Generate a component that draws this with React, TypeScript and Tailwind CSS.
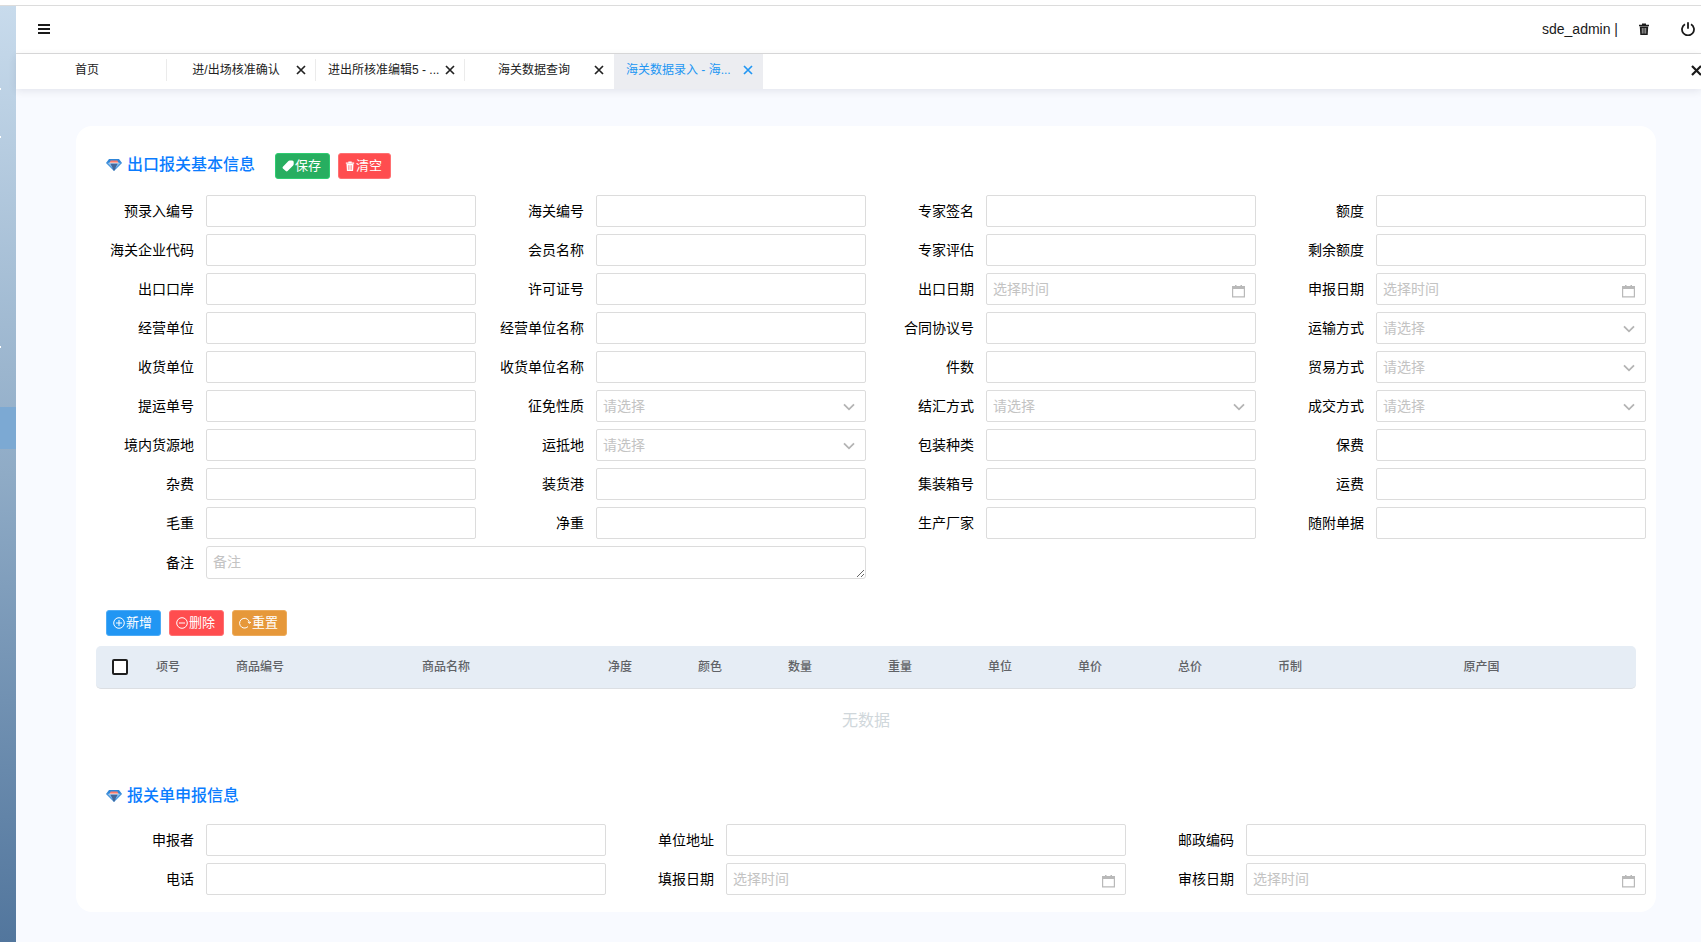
import { useState } from "react";
import type { ReactNode } from "react";
import { clsx } from "clsx";

type Kind = "text" | "date" | "select";

type FieldDef = {
  name: string;
  label: string;
  kind?: Kind;
};

const tabs = [
  { id: "home", title: "首页", closable: false },
  { id: "confirm", title: "进/出场核准确认", closable: true },
  { id: "edit", title: "进出所核准编辑5 - ...", closable: true },
  { id: "query", title: "海关数据查询", closable: true },
  { id: "entry", title: "海关数据录入 - 海...", closable: true },
];

const basicFields: FieldDef[] = [
  { name: "preEntryNo", label: "预录入编号" },
  { name: "customsNo", label: "海关编号" },
  { name: "expertSign", label: "专家签名" },
  { name: "quota", label: "额度" },
  { name: "companyCode", label: "海关企业代码" },
  { name: "memberName", label: "会员名称" },
  { name: "expertReview", label: "专家评估" },
  { name: "quotaLeft", label: "剩余额度" },
  { name: "exportPort", label: "出口口岸" },
  { name: "licenseNo", label: "许可证号" },
  { name: "exportDate", label: "出口日期", kind: "date" },
  { name: "declareDate", label: "申报日期", kind: "date" },
  { name: "operator", label: "经营单位" },
  { name: "operatorName", label: "经营单位名称" },
  { name: "contractNo", label: "合同协议号" },
  { name: "transport", label: "运输方式", kind: "select" },
  { name: "receiver", label: "收货单位" },
  { name: "receiverName", label: "收货单位名称" },
  { name: "pieces", label: "件数" },
  { name: "trade", label: "贸易方式", kind: "select" },
  { name: "billNo", label: "提运单号" },
  { name: "taxNature", label: "征免性质", kind: "select" },
  { name: "settlement", label: "结汇方式", kind: "select" },
  { name: "deal", label: "成交方式", kind: "select" },
  { name: "origin", label: "境内货源地" },
  { name: "destination", label: "运抵地", kind: "select" },
  { name: "packing", label: "包装种类" },
  { name: "insurance", label: "保费" },
  { name: "extras", label: "杂费" },
  { name: "loadingPort", label: "装货港" },
  { name: "containerNo", label: "集装箱号" },
  { name: "freight", label: "运费" },
  { name: "grossWeight", label: "毛重" },
  { name: "netWeight", label: "净重" },
  { name: "producer", label: "生产厂家" },
  { name: "documents", label: "随附单据" },
];

const declareFields: FieldDef[] = [
  { name: "declarant", label: "申报者" },
  { name: "address", label: "单位地址" },
  { name: "postcode", label: "邮政编码" },
  { name: "phone", label: "电话" },
  { name: "fillDate", label: "填报日期", kind: "date" },
  { name: "auditDate", label: "审核日期", kind: "date" },
];

const columns = [
  { title: "项号", width: "w-[70px]" },
  { title: "商品编号", width: "w-[114px]" },
  { title: "商品名称", width: "w-[258px]" },
  { title: "净度", width: "w-[90px]" },
  { title: "颜色", width: "w-[90px]" },
  { title: "数量", width: "w-[90px]" },
  { title: "重量", width: "w-[110px]" },
  { title: "单位", width: "w-[90px]" },
  { title: "单价", width: "w-[90px]" },
  { title: "总价", width: "w-[110px]" },
  { title: "币制", width: "w-[90px]" },
];

const control =
  "h-8 w-full rounded-xs border border-[#dcdcdc] bg-white px-1.5 text-sm text-black outline-none placeholder:text-[#c3c3c3] focus:border-[#2196f3]";

function CloseIcon() {
  return (
    <svg viewBox="0 0 10 10" className="size-2.5" aria-hidden>
      <path d="M1 1l8 8M9 1l-8 8" stroke="currentColor" strokeWidth="1.7" fill="none" />
    </svg>
  );
}

function TrashIcon({ className, slot }: { className: string; slot: string }) {
  return (
    <svg viewBox="0 0 10 12" className={className} aria-hidden>
      <path d="M3 1.8V.5h4v1.3h3v1.4H0V1.8z" fill="currentColor" />
      <path d="M.8 3.6h8.4L8.7 12H1.3z" fill="currentColor" />
      <path d="M3.3 5v5.6M5 5v5.6M6.7 5v5.6" stroke={slot} strokeWidth=".6" />
    </svg>
  );
}

function PowerIcon() {
  return (
    <svg viewBox="0 0 14 14" className="size-3.5" aria-hidden>
      <path
        d="M4 2.2a6 6 0 1 0 6 0M7 .2v6.6"
        fill="none"
        stroke="currentColor"
        strokeWidth="1.8"
      />
    </svg>
  );
}

function TagIcon() {
  return (
    <svg viewBox="0 0 12 12" className="size-3" aria-hidden>
      <path
        d="M7.6.6h2.600q1.500 0 1.500 1.500v2q0 .8-.6 1.500L5.600 11q-.9.8-1.800 0L.9 8.600q-.8-.9 0-1.800L6.200 1.200q.6-.6 1.400-.6z"
        fill="currentColor"
      />
    </svg>
  );
}

function CircleIcon({ children }: { children: ReactNode }) {
  return (
    <svg
      viewBox="0 0 12 12"
      className="size-3"
      fill="none"
      stroke="currentColor"
      aria-hidden
    >
      {children}
    </svg>
  );
}

function GemIcon() {
  return (
    <svg viewBox="0 0 16 12" className="h-3 w-4" aria-hidden>
      <path d="M3 0h10l3 4-8 8-8-8z" fill="#2f86d8" />
      <path d="M4 4.500h8L8 12z" fill="#44679a" />
      <path d="M1 3.800h3L7 10z" fill="#7fb7e8" />
      <path d="M15 3.800h-3L9 10z" fill="#7fb7e8" />
      <path d="M4.600 1.500h6.800l1 2.500H3.600z" fill="#fa7b6b" />
      <path d="M3.400 4h9.200" stroke="#fff" strokeWidth=".8" />
    </svg>
  );
}

function CalendarIcon() {
  return (
    <svg
      viewBox="0 0 13 13"
      className="pointer-events-none absolute top-3 right-[11px] size-[13px] text-[#b9b9b9]"
      aria-hidden
    >
      <path d="M0 1h13v11.500H0z M1.200 4v7.300h10.600V4z" fill="currentColor" fillRule="evenodd" />
      <path d="M3 0h1.500v1.500H3zM8.500 0H10v1.500H8.500z" fill="currentColor" />
    </svg>
  );
}

function ChevronIcon() {
  return (
    <svg
      viewBox="0 0 12 8"
      className="pointer-events-none absolute top-[13px] right-[11px] h-2 w-3 text-[#b4b4b4]"
      aria-hidden
    >
      <path d="M1 1.300l5 5 5-5" fill="none" stroke="currentColor" strokeWidth="1.800" />
    </svg>
  );
}

function Field({ field }: { field: FieldDef }) {
  const { name, label, kind = "text" } = field;
  return (
    <div className="flex items-center">
      <label htmlFor={name} className="w-[120px] shrink-0 pr-3 text-right text-sm text-black">
        {label}
      </label>
      <div className="relative min-w-0 flex-1">
        {kind === "select" ? (
          <>
            <select
              id={name}
              name={name}
              defaultValue=""
              className={clsx(control, "block appearance-none text-[#c3c3c3]!")}
            >
              <option value="">请选择</option>
            </select>
            <ChevronIcon />
          </>
        ) : (
          <input
            id={name}
            name={name}
            type="text"
            placeholder={kind === "date" ? "选择时间" : undefined}
            className={clsx(control, "block")}
          />
        )}
        {kind === "date" ? <CalendarIcon /> : null}
      </div>
    </div>
  );
}

function SectionTitle({ children }: { children: ReactNode }) {
  return (
    <h2 className="flex items-center gap-[5px] text-base font-medium text-[#0a7cff]">
      <GemIcon />
      {children}
    </h2>
  );
}

function ActionButton({ tone, children }: { tone: string; children: ReactNode }) {
  return (
    <button
      type="button"
      className={clsx(
        "flex h-[26px] items-center gap-px rounded-[3px] border pr-2 pl-1.5 text-[13px] whitespace-nowrap text-white",
        tone,
      )}
    >
      {children}
    </button>
  );
}

function Sidebar() {
  return (
    <aside className="relative w-4 shrink-0 bg-linear-to-b from-[#c8dbec] via-[#8fabc6] to-[#52769d]">
      <div className="absolute top-[401px] h-[42px] w-full bg-[#7ca9d3]" />
      <span className="absolute top-[82px] h-0.5 w-px bg-white" />
      <span className="absolute top-[130px] h-0.5 w-px bg-white" />
      <span className="absolute top-[340px] h-0.5 w-px bg-white" />
    </aside>
  );
}

function TopBar() {
  return (
    <header className="flex h-12 items-center border-b border-[#dcdcdc] bg-white pr-1.5 pb-0.5 pl-[22px] text-[#1a1a1a]">
      <button type="button" aria-label="菜单">
        <svg viewBox="0 0 12 10" className="h-2.5 w-3" aria-hidden>
          <path d="M0 1h12M0 5h12M0 9h12" stroke="currentColor" strokeWidth="2" />
        </svg>
      </button>
      <span className="ml-auto text-sm">sde_admin |</span>
      <button type="button" aria-label="清除缓存" className="ml-[21px]">
        <TrashIcon className="h-3 w-2.5" slot="#fff" />
      </button>
      <button type="button" aria-label="退出" className="ml-8">
        <PowerIcon />
      </button>
    </header>
  );
}

function TabBar() {
  const [active, setActive] = useState("entry");
  return (
    <nav className="relative flex h-[35px] overflow-hidden bg-white pl-0.5 shadow-[0_2px_8px_rgba(0,0,40,0.09)]">
      {tabs.map((tab, index) => (
        <div
          key={tab.id}
          className={clsx(
            "flex w-[149px] shrink-0 items-center pb-1 pl-3 text-xs",
            tab.id === active ? "bg-[#ecedf1] text-[#2196f3]" : "text-[#222]",
          )}
        >
          <button
            type="button"
            onClick={() => setActive(tab.id)}
            className={clsx(
              "w-[114px] overflow-hidden whitespace-nowrap",
              tab.title.endsWith("...") ? "text-left" : "text-center",
            )}
          >
            {tab.title}
          </button>
          {tab.closable ? (
            <button type="button" aria-label={`关闭 ${tab.title}`} className="ml-[3px]">
              <CloseIcon />
            </button>
          ) : null}
          {index < 3 ? <span className="ml-auto h-[22px] w-px bg-[#ebebeb]" /> : null}
        </div>
      ))}
      <button
        type="button"
        aria-label="关闭全部"
        className="-mr-px ml-auto shrink-0 pb-0.5 text-[#1a1a1a]"
      >
        <svg viewBox="0 0 11 11" className="size-[11px]" aria-hidden>
          <path d="M1 1l9 9M10 1l-9 9" stroke="currentColor" strokeWidth="2.2" />
        </svg>
      </button>
    </nav>
  );
}

function GoodsTable() {
  return (
    <table className="mt-2.5 w-full table-fixed border-separate border-spacing-0 text-xs">
      <thead>
        <tr className="h-[43px] text-[#606266]">
          <th className="w-[37px] rounded-l-[5px] border-b border-[#dcdfe3] bg-[#e6edf5] pl-4 text-left">
            <input
              type="checkbox"
              aria-label="全选"
              className="block size-4 appearance-none rounded-xs border-2 border-[#1f1f1f] bg-white checked:bg-[#2196f3]"
            />
          </th>
          {columns.map((column) => (
            <th
              key={column.title}
              className={clsx(
                "border-b border-[#dcdfe3] bg-[#e6edf5] font-medium",
                column.width,
              )}
            >
              {column.title}
            </th>
          ))}
          <th className="rounded-r-[5px] border-b border-[#dcdfe3] bg-[#e6edf5] pr-2 font-medium">
            原产国
          </th>
        </tr>
      </thead>
      <tbody>
        <tr>
          <td colSpan={13} className="h-16 text-center text-base text-[#d0d7db]">
            无数据
          </td>
        </tr>
      </tbody>
    </table>
  );
}

export default function App() {
  return (
    <div className="flex min-h-screen flex-col bg-white pt-[5px] font-['Liberation_Sans','Noto_Sans_CJK_SC',sans-serif]">
      <div className="flex flex-1 border-t border-[#dcdcdc]">
        <Sidebar />
        <div className="min-w-0 flex-1 bg-[#f8faff]">
          <TopBar />
          <TabBar />
          <main className="mt-[37px] mr-[45px] mb-[30px] ml-[60px] rounded-2xl bg-white px-2.5 pt-[27px] pb-[17px]">
            <div className="flex h-[26px] items-center gap-2 pl-5">
              <div className="mr-3 pb-0.5">
                <SectionTitle>出口报关基本信息</SectionTitle>
              </div>
              <ActionButton tone="bg-[#27ae60] border-[#2ecc71]">
                <TagIcon />
                保存
              </ActionButton>
              <ActionButton tone="bg-[#ff4d4f] border-[#ff7072]">
                <TrashIcon className="h-2.5 w-2.5" slot="#ff4d4f" />
                清空
              </ActionButton>
            </div>

            <form className="mt-4 grid grid-cols-4 gap-y-[7px]">
              {basicFields.map((field) => (
                <Field key={field.name} field={field} />
              ))}
              <div className="col-span-2 flex items-center">
                <label
                  htmlFor="remark"
                  className="w-[120px] shrink-0 pr-3 text-right text-sm text-black"
                >
                  备注
                </label>
                <textarea
                  id="remark"
                  name="remark"
                  placeholder="备注"
                  className="block h-[33px] min-w-0 flex-1 resize-y overflow-hidden rounded-[3px] border border-[#dcdcdc] px-1.5 py-[5px] text-sm outline-none placeholder:text-[#c3c3c3]"
                />
              </div>
            </form>

            <div className="mt-[31px] flex gap-2 pl-5">
              <ActionButton tone="bg-[#2196f3] border-[#4dabf5]">
                <CircleIcon>
                  <circle cx="6" cy="6" r="5.3" />
                  <path d="M6 3v6M3 6h6" />
                </CircleIcon>
                新增
              </ActionButton>
              <ActionButton tone="bg-[#ff4d4f] border-[#ff7072]">
                <CircleIcon>
                  <circle cx="6" cy="6" r="5.3" />
                  <path d="M3 6h6" />
                </CircleIcon>
                删除
              </ActionButton>
              <ActionButton tone="bg-[#e6983a] border-[#ecab5c]">
                <CircleIcon>
                  <path d="M9 9.600A4.900 4.900 0 1 1 10.400 6M8.800 5l1.600 1.400L12 5" />
                </CircleIcon>
                重置
              </ActionButton>
            </div>

            <div className="px-2.5">
              <GoodsTable />
            </div>

            <div className="mt-[29px] flex h-[26px] items-center pt-0.5 pl-5">
              <SectionTitle>报关单申报信息</SectionTitle>
            </div>
            <form className="mt-4 grid grid-cols-3 gap-y-[7px]">
              {declareFields.map((field) => (
                <Field key={field.name} field={field} />
              ))}
            </form>
          </main>
        </div>
      </div>
    </div>
  );
}
